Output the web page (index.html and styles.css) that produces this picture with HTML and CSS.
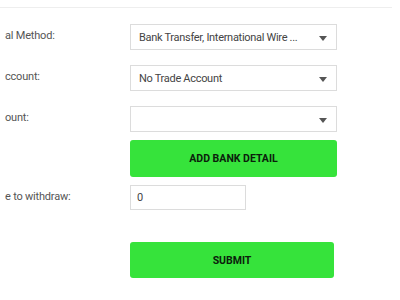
FILE: index.html
```html
<!DOCTYPE html>
<html lang="en">
<head>
    <meta charset="UTF-8">
    <meta name="viewport" content="width=device-width, initial-scale=1.0">
    <title>Withdraw</title>
    <link rel="stylesheet" href="styles.css">
</head>
<body>
    <div class="top-rule"></div>

    <div class="withdraw-form">
        <div class="row first">
            <label>al Method:</label>
            <div class="select">
                <span>Bank Transfer, International Wire ...</span>
                <svg class="caret" width="8" height="5" viewBox="0 0 8 5"><path d="M0 0 H8 L4 5 Z" fill="#555"/></svg>
            </div>
        </div>

        <div class="row">
            <label>ccount:</label>
            <div class="select">
                <span>No Trade Account</span>
                <svg class="caret" width="8" height="5" viewBox="0 0 8 5"><path d="M0 0 H8 L4 5 Z" fill="#555"/></svg>
            </div>
        </div>

        <div class="row">
            <label>ount:</label>
            <div class="select">
                <span></span>
                <svg class="caret" width="8" height="5" viewBox="0 0 8 5"><path d="M0 0 H8 L4 5 Z" fill="#555"/></svg>
            </div>
        </div>

        <div class="row tight">
            <label></label>
            <button type="button" class="btn-green">ADD BANK DETAIL</button>
        </div>

        <div class="row tight">
            <label>e to withdraw:</label>
            <input type="text" class="amount" value="0">
        </div>

        <div class="row submit-row">
            <label></label>
            <button type="button" class="btn-green submit">SUBMIT</button>
        </div>
    </div>
</body>
</html>
```

FILE: styles.css
```css
body {
    margin: 0;
    padding-top: 7px;
    font-family: Roboto, "Liberation Sans", sans-serif;
    background: #fff;
    color: #555;
}
.top-rule {
    width: 392px;
    border-top: 1px solid #eeeeee;
}
.withdraw-form {
    padding-top: 16px;
}
.row {
    display: flex;
    align-items: flex-start;
    margin-top: 15px;
}
.row.first {
    margin-top: 0;
}
.row.tight {
    margin-top: 8px;
}
.row.submit-row {
    margin-top: 32px;
}
label {
    width: 125px;
    padding-left: 5px;
    padding-top: 5px;
    font-size: 11px;
    letter-spacing: -0.2px;
    color: #555;
    flex-shrink: 0;
}
.select {
    width: 207px;
    height: 26px;
    box-sizing: border-box;
    border: 1px solid #dcdcdc;
    display: flex;
    align-items: center;
    justify-content: space-between;
    padding: 0 9px 0 8px;
    font-size: 11px;
    letter-spacing: -0.3px;
    color: #444;
    white-space: nowrap;
}
.caret {
    margin-top: 2px;
}
.btn-green {
    width: 207px;
    height: 37px;
    border: none;
    border-radius: 3px;
    background-color: #36e33b;
    color: #0b200b;
    font-family: Roboto, "Liberation Sans", sans-serif;
    font-weight: bold;
    font-size: 10.5px;
    cursor: pointer;
}
.btn-green.submit {
    width: 204px;
    height: 36px;
}
.amount {
    width: 116px;
    height: 25px;
    box-sizing: border-box;
    border: 1px solid #dcdcdc;
    padding: 0 6px;
    font-family: Roboto, "Liberation Sans", sans-serif;
    font-size: 11px;
    color: #444;
    outline: none;
}
```
